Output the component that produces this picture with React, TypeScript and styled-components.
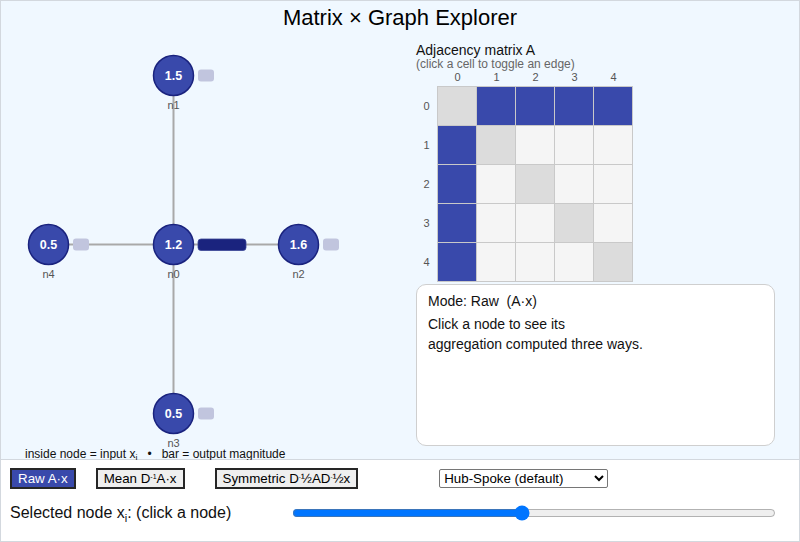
import React from 'react';
import styled, { createGlobalStyle } from 'styled-components';

const Global = createGlobalStyle`
  html, body { margin: 0; padding: 0; background: #fff; }
  body { font-family: "Liberation Sans", Arial, Helvetica, sans-serif; color: #111; }
  * { box-sizing: border-box; }
`;

const Frame = styled.div`
  width: 800px;
  height: 542px;
  border: 1px solid #d3d8de;
  display: flex;
  flex-direction: column;
  overflow: hidden;
`;

const Stage = styled.section`
  height: 459px;
  flex: none;
  background: #f0f8ff;
  border-bottom: 1px solid #d3d8de;
  display: grid;
  grid-template-columns: 415px 1fr;
  grid-template-rows: 39px 1fr;
`;

const Title = styled.h1`
  grid-column: 1 / -1;
  margin: 0;
  padding-top: 4px;
  font-size: 22px;
  line-height: 26px;
  font-weight: normal;
  text-align: center;
  color: #000;
`;

const GraphPanel = styled.div`
  display: flex;
  flex-direction: column;
`;

const GraphSvg = styled.svg`
  display: block;
  width: 415px;
  height: 408px;
`;

const Legend = styled.div`
  height: 11px;
  padding-left: 24px;
  font-size: 12px;
  line-height: 12px;
  color: #111;
  white-space: pre;
  overflow: visible;
`;

const Sub = styled.sub<{ $size: number }>`
  font-size: ${(p) => p.$size}px;
  line-height: 0;
`;

const Sup = styled.sup<{ $size: number }>`
  font-size: ${(p) => p.$size}px;
  line-height: 0;
  vertical-align: 4px;
`;

const RightPanel = styled.div`
  padding: 2px 24px 0 0;
  display: flex;
  flex-direction: column;
`;

const MatrixTitle = styled.div`
  font-size: 14px;
  line-height: 16px;
  color: #111;
`;

const MatrixHint = styled.div`
  font-size: 12px;
  line-height: 13px;
  color: #666;
`;

const ColHeader = styled.div`
  display: grid;
  grid-template-columns: 21px repeat(5, 39px);
  padding-left: 1px;
  font-size: 11px;
  line-height: 13px;
  color: #555;
  margin-bottom: 2px;
  & > span { text-align: center; }
`;

const MatrixBody = styled.div`
  display: flex;
`;

const RowLabels = styled.div`
  width: 21px;
  padding-top: 1px;
  display: flex;
  flex-direction: column;
  gap: 1px;
  font-size: 11px;
  color: #555;
  & > span {
    height: 38px;
    display: flex;
    align-items: center;
    justify-content: center;
  }
`;

const CellGrid = styled.div`
  display: grid;
  grid-template-columns: repeat(5, 38px);
  grid-auto-rows: 38px;
  gap: 1px;
  padding: 1px;
  background: #c9c9c9;
`;

const Cell = styled.div<{ $kind: 'on' | 'diag' | 'off' }>`
  cursor: pointer;
  background: ${(p) => (p.$kind === 'on' ? '#3949ab' : p.$kind === 'diag' ? '#dcdcdc' : '#f5f5f5')};
`;

const InfoBox = styled.div`
  margin-top: 2px;
  height: 162px;
  background: #fff;
  border: 1px solid #cfcfcf;
  border-radius: 10px;
  padding: 6px 11px;
  font-size: 14px;
  color: #111;
`;

const ModeLine = styled.div`
  line-height: 20px;
  margin-bottom: 4px;
  white-space: pre;
`;

const InfoText = styled.div`
  line-height: 19.5px;
`;

const Controls = styled.section`
  flex: 1;
  background: #fff;
  padding: 7px 0 0 9px;
  display: flex;
  flex-direction: column;
`;

const ButtonRow = styled.div`
  display: flex;
  align-items: center;
  height: 22px;
`;

const ModeButton = styled.button<{ $active?: boolean; $gap?: number }>`
  margin: 0 0 0 ${(p) => p.$gap ?? 0}px;
  font-family: "Liberation Sans", Arial, Helvetica, sans-serif;
  font-size: 13.33px;
  line-height: 15px;
  padding: 1px 6px;
  border: 2px solid #262626;
  border-radius: 0;
  background: ${(p) => (p.$active ? '#3949ab' : '#efefef')};
  color: ${(p) => (p.$active ? '#fff' : '#000')};
  cursor: pointer;
  white-space: nowrap;
`;

const Preset = styled.select`
  margin-left: 81px;
  width: 169px;
  height: 19px;
  font-family: "Liberation Sans", Arial, Helvetica, sans-serif;
  font-size: 13.33px;
  border: 1px solid #767676;
  border-radius: 2px;
  background: #fff;
  color: #000;
`;

const SliderRow = styled.div`
  margin-top: 13px;
  display: flex;
  align-items: center;
  height: 22px;
`;

const SelectedLabel = styled.div`
  width: 282px;
  font-size: 16px;
  color: #111;
`;

const Slider = styled.input`
  width: 484px;
  margin: 0;
`;

type NodeDef = { id: string; x: number; y: number; v: string; bar: number; hub?: boolean };

const nodes: NodeDef[] = [
  { id: 'n0', x: 172.5, y: 204.5, v: '1.2', bar: 48, hub: true },
  { id: 'n1', x: 172.5, y: 35.5, v: '1.5', bar: 16 },
  { id: 'n2', x: 297.5, y: 204.5, v: '1.6', bar: 16 },
  { id: 'n3', x: 172.5, y: 373.5, v: '0.5', bar: 16 },
  { id: 'n4', x: 47.5, y: 204.5, v: '0.5', bar: 16 },
];

const Graph: React.FC = () => {
  const hub = nodes[0];
  return (
    <GraphSvg viewBox="0 0 415 408">
      {nodes.slice(1).map((n) => (
        <line key={n.id} x1={hub.x} y1={hub.y} x2={n.x} y2={n.y} stroke="#a9a9a9" strokeWidth={2} />
      ))}
      {nodes.map((n) => (
        <g key={n.id} style={{ cursor: 'pointer' }}>
          <circle cx={n.x} cy={n.y} r={20} fill="#3949ab" stroke="#1a237e" strokeWidth={1.5} />
          <text
            x={n.x}
            y={n.y + 4.5}
            textAnchor="middle"
            fill="#fff"
            fontSize={12.5}
            fontWeight="bold"
            fontFamily='"Liberation Sans", Arial, sans-serif'
          >
            {n.v}
          </text>
          <text
            x={n.x}
            y={n.y + 33}
            textAnchor="middle"
            fill="#555"
            fontSize={11}
            fontFamily='"Liberation Sans", Arial, sans-serif'
          >
            {n.id}
          </text>
          <rect
            x={n.x + 24.5}
            y={n.y - (n.hub ? 5.5 : 6)}
            width={n.bar}
            height={n.hub ? 11.5 : 12}
            rx={3}
            fill={n.hub ? '#1a237e' : '#c1c5de'}
            stroke={n.hub ? '#3a4596' : 'none'}
            strokeWidth={0.8}
          />
        </g>
      ))}
    </GraphSvg>
  );
};

const matrix = [0, 1, 2, 3, 4].map((i) =>
  [0, 1, 2, 3, 4].map((j) => (i === j ? 'diag' : i === 0 || j === 0 ? 'on' : 'off') as 'on' | 'diag' | 'off')
);

export default function App() {
  return (
    <>
      <Global />
      <Frame>
        <Stage>
          <Title>Matrix × Graph Explorer</Title>
          <GraphPanel>
            <Graph />
            <Legend>
              inside node = input x<Sub $size={9}>i</Sub>
              {'   •   '}bar = output magnitude
            </Legend>
          </GraphPanel>
          <RightPanel>
            <MatrixTitle>Adjacency matrix A</MatrixTitle>
            <MatrixHint>(click a cell to toggle an edge)</MatrixHint>
            <ColHeader>
              <span />
              {[0, 1, 2, 3, 4].map((j) => (
                <span key={j}>{j}</span>
              ))}
            </ColHeader>
            <MatrixBody>
              <RowLabels>
                {[0, 1, 2, 3, 4].map((i) => (
                  <span key={i}>{i}</span>
                ))}
              </RowLabels>
              <CellGrid>
                {matrix.map((row, i) => row.map((k, j) => <Cell key={`${i}-${j}`} $kind={k} />))}
              </CellGrid>
            </MatrixBody>
            <InfoBox>
              <ModeLine>Mode: Raw  (A·x)</ModeLine>
              <InfoText>
                Click a node to see its
                <br />
                aggregation computed three ways.
              </InfoText>
            </InfoBox>
          </RightPanel>
        </Stage>
        <Controls>
          <ButtonRow>
            <ModeButton $active>Raw A·x</ModeButton>
            <ModeButton $gap={20}>
              Mean D<Sup $size={7}>-1</Sup>A·x
            </ModeButton>
            <ModeButton $gap={30}>
              Symmetric D<Sup $size={6}>-</Sup>½AD<Sup $size={6}>-</Sup>½x
            </ModeButton>
            <Preset defaultValue="hub">
              <option value="hub">Hub-Spoke (default)</option>
              <option value="chain">Chain</option>
              <option value="ring">Ring</option>
            </Preset>
          </ButtonRow>
          <SliderRow>
            <SelectedLabel>
              Selected node x<Sub $size={11}>i</Sub>: (click a node)
            </SelectedLabel>
            <Slider type="range" min={0} max={100} step={0.5} defaultValue={47.5} />
          </SliderRow>
        </Controls>
      </Frame>
    </>
  );
}
